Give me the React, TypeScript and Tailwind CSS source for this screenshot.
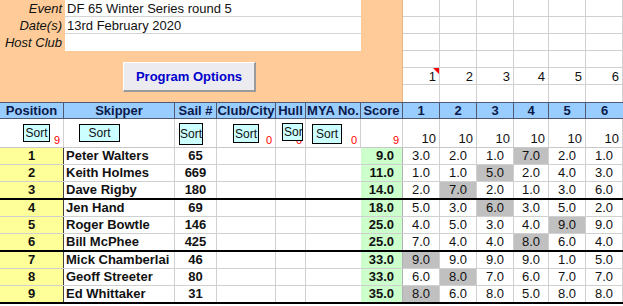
import React from "react";

const COLS =
  "grid grid-cols-[64px_111px_42px_59px_30px_55px_42px_37px_37px_37px_35px_37px_37px]";

type Row = [string, string, string, string, string[], number, boolean];

const rows: Row[] = [
  ["1", "Peter Walters", "65", "9.0", ["3.0", "2.0", "1.0", "7.0", "2.0", "1.0"], 3, false],
  ["2", "Keith Holmes", "669", "11.0", ["1.0", "1.0", "5.0", "2.0", "4.0", "3.0"], 2, false],
  ["3", "Dave Rigby", "180", "14.0", ["2.0", "7.0", "2.0", "1.0", "3.0", "6.0"], 1, true],
  ["4", "Jen Hand", "69", "18.0", ["5.0", "3.0", "6.0", "3.0", "5.0", "2.0"], 2, false],
  ["5", "Roger Bowtle", "146", "25.0", ["4.0", "5.0", "3.0", "4.0", "9.0", "9.0"], 4, false],
  ["6", "Bill McPhee", "425", "25.0", ["7.0", "4.0", "4.0", "8.0", "6.0", "4.0"], 3, true],
  ["7", "Mick Chamberlai", "46", "33.0", ["9.0", "9.0", "9.0", "9.0", "1.0", "5.0"], 0, false],
  ["8", "Geoff Streeter", "80", "33.0", ["6.0", "8.0", "7.0", "6.0", "7.0", "7.0"], 1, false],
  ["9", "Ed Whittaker", "31", "35.0", ["8.0", "6.0", "8.0", "5.0", "8.0", "8.0"], 0, true],
];

const headers = ["Position", "Skipper", "Sail #", "Club/City", "Hull", "MYA No.", "Score", "1", "2", "3", "4", "5", "6"];

function SortBtn({ cls, clip }: { cls: string; clip?: boolean }) {
  return (
    <div
      className={`absolute bg-[#CCFFFF] border border-black text-[12px] leading-[14px] text-[#111] overflow-hidden whitespace-nowrap ${clip ? "text-left pl-[1px] pt-[1px]" : "flex items-center justify-center"} ${cls}`}
    >
      Sort
    </div>
  );
}

function Red({ v }: { v: string }) {
  return (
    <span className="absolute right-[3px] bottom-[1px] text-[11px] leading-[12px] text-[#ff0000]">{v}</span>
  );
}

export default function App() {
  return (
    <div
      className="w-[623px] h-[306px] overflow-hidden bg-white text-[13px] text-[#111]"
      style={{ fontFamily: "'Liberation Sans', Arial, sans-serif" }}
    >
      {/* Top section */}
      <div className="flex h-[102px]">
        <div className="w-[403px] bg-[#FFCC99] flex flex-col">
          <div className="flex">
            <div className="w-[65px] flex flex-col italic text-right pr-[3px]">
              <div className="h-[17px] leading-[17px]">Event</div>
              <div className="h-[17px] leading-[17px]">Date(s)</div>
              <div className="h-[17px] leading-[17px] whitespace-nowrap">Host Club</div>
            </div>
            <div className="w-[296px] bg-white flex flex-col">
              <div className="h-[17px] leading-[17px] pl-[2px] border-b border-[#d4d4d4]">DF 65 Winter Series round 5</div>
              <div className="h-[17px] leading-[17px] pl-[2px] border-b border-[#d4d4d4]">13rd February 2020</div>
              <div className="h-[17px]"></div>
            </div>
          </div>
          <div className="flex pl-[123px] pt-[11px]">
            <div className="w-[133px] h-[30px] bg-[#ececf0] border-t border-l border-t-white border-l-white border-r-2 border-b-2 border-r-[#9a9a9a] border-b-[#9a9a9a] flex items-center justify-center font-bold text-[#0000cc] text-[13px]">
              Program Options
            </div>
          </div>
        </div>
        <div className="flex-1 grid grid-cols-[37px_37px_37px_35px_37px_37px] grid-rows-[repeat(6,17px)] border-l border-[#e6b68a]">
          {Array.from({ length: 36 }).map((_, i) => {
            const r = Math.floor(i / 6);
            const c = i % 6;
            return (
              <div
                key={i}
                className={`relative border-r border-[#d0d0d0] ${r < 5 ? "border-b" : ""} text-right pr-[3px] leading-[17px]`}
              >
                {r === 4 ? String(c + 1) : ""}
                {r === 4 && c === 0 ? (
                  <span className="absolute top-0 right-0 w-0 h-0 border-t-[6px] border-t-[#ff0000] border-l-[6px] border-l-transparent"></span>
                ) : null}
              </div>
            );
          })}
        </div>
      </div>

      {/* Header row */}
      <div className={`${COLS} h-[17px] bg-[#99CCFF] border-t border-b border-[#4f5a72]`}>
        {headers.map((h, i) => (
          <div
            key={i}
            className={`text-center font-bold text-[#0b1a4a] leading-[15px] whitespace-nowrap overflow-hidden ${i < 12 ? "border-r border-[#4f5a72]" : ""}`}
          >
            {h}
          </div>
        ))}
      </div>

      {/* Sort row */}
      <div className={`${COLS} h-[29px] border-b border-[#c8c8c8]`}>
        <div className="relative border-r border-[#d0d0d0]">
          <SortBtn cls="left-[23px] top-[5px] w-[27px] h-[18px]" />
          <Red v="9" />
        </div>
        <div className="relative border-r border-[#d0d0d0]">
          <SortBtn cls="left-[15px] top-[5px] w-[41px] h-[18px]" />
        </div>
        <div className="relative border-r border-[#d0d0d0]">
          <SortBtn cls="left-[4px] top-[4px] w-[24px] h-[22px]" />
        </div>
        <div className="relative border-r border-[#d0d0d0]">
          <Red v="0" />
          <SortBtn cls="left-[16px] top-[5px] w-[26px] h-[19px]" />
        </div>
        <div className="relative border-r border-[#d0d0d0]">
          <Red v="0" />
          <SortBtn cls="left-[6px] top-[4px] w-[21px] h-[18px]" clip />
        </div>
        <div className="relative border-r border-[#d0d0d0]">
          <SortBtn cls="left-[6px] top-[5px] w-[30px] h-[20px]" />
          <Red v="0" />
        </div>
        <div className="relative border-r border-[#d0d0d0]">
          <Red v="9" />
        </div>
        {Array.from({ length: 6 }).map((_, i) => (
          <div key={i} className="relative border-r border-[#d0d0d0] flex items-end justify-end pr-[3px] pb-[1px] leading-[15px]">
            10
          </div>
        ))}
      </div>

      {/* Data rows */}
      {rows.map((r) => {
        const [pos, name, sail, score, races, disc, thick] = r;
        const rowCls = thick ? "h-[18px] border-b-2 border-black" : "h-[17px] border-b border-[#d0d0d0]";
        return (
          <div key={pos} className={`${COLS} ${rowCls}`}>
            <div className="bg-[#FFFF99] border-r border-[#404040] text-center font-bold leading-[16px]">{pos}</div>
            <div className="border-r border-[#d0d0d0] font-bold pl-[2px] leading-[16px] whitespace-nowrap overflow-hidden">{name}</div>
            <div className="border-r border-[#d0d0d0] font-bold text-center leading-[16px]">{sail}</div>
            <div className="border-r border-[#d0d0d0]"></div>
            <div className="border-r border-[#d0d0d0]"></div>
            <div></div>
            <div className="bg-[#CCFFCC] border-r border-[#b0b0b0] font-bold text-right pr-[8px] leading-[16px]">{score}</div>
            {races.map((v, i) => (
              <div
                key={i}
                className={`${i === disc ? "bg-[#C0C0C0]" : ""} border-r border-[#d0d0d0] text-center leading-[16px]`}
              >
                {v}
              </div>
            ))}
          </div>
        );
      })}
    </div>
  );
}
